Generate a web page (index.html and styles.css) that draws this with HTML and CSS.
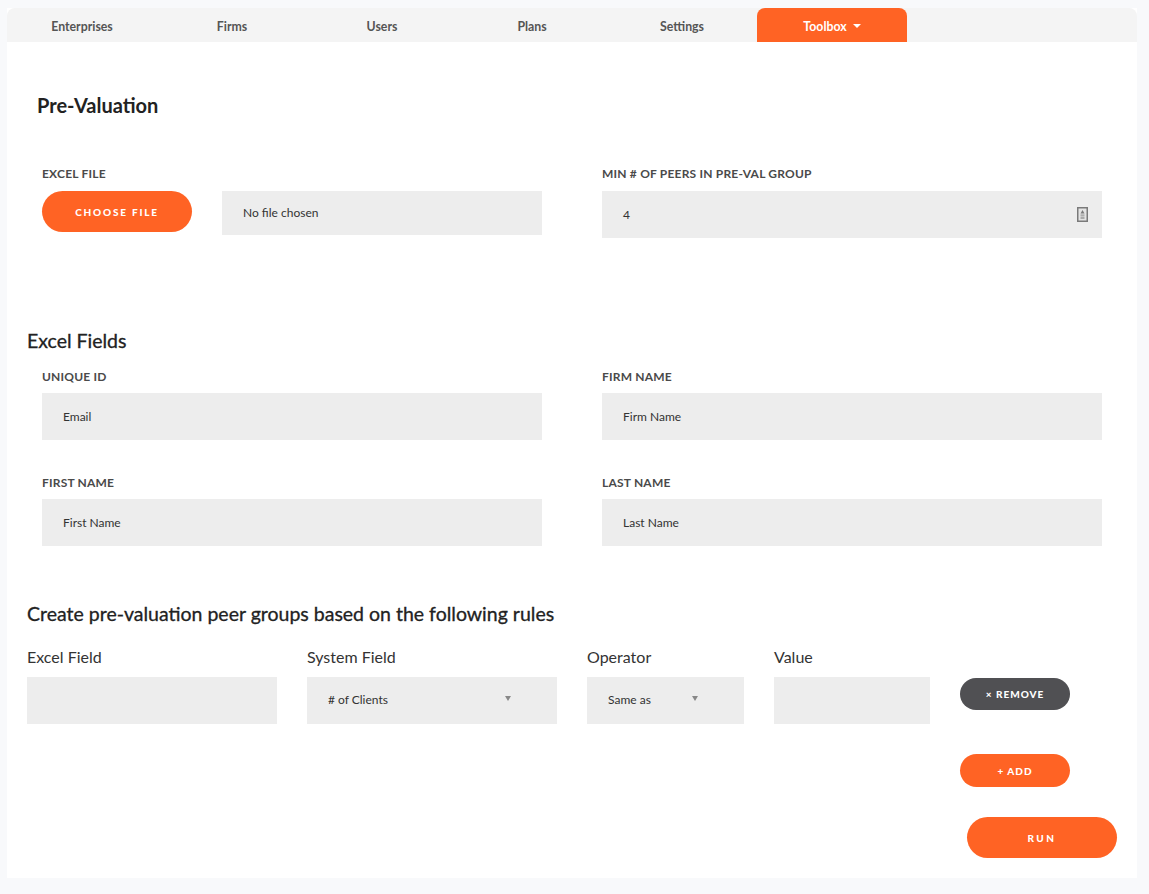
FILE: index.html
```html
<!DOCTYPE html>
<html lang="en">
<head>
<meta charset="utf-8">
<title>Pre-Valuation</title>
<link rel="stylesheet" href="styles.css">
</head>
<body>
<div class="card">
  <nav class="nav">
    <a class="tab">Enterprises</a>
    <a class="tab">Firms</a>
    <a class="tab">Users</a>
    <a class="tab">Plans</a>
    <a class="tab">Settings</a>
    <a class="tab active">Toolbox <span class="caret"></span></a>
  </nav>

  <section class="preval">
    <h1 class="title">Pre-Valuation</h1>
    <div class="grid top-grid">
      <div class="field">
        <label class="label">EXCEL FILE</label>
        <div class="file-row">
          <button class="btn btn-choose">CHOOSE FILE</button>
          <div class="file-box">No file chosen</div>
        </div>
      </div>
      <div class="field">
        <label class="label">MIN # OF PEERS IN PRE-VAL GROUP</label>
        <div class="input input-number">
          <span>4</span>
          <svg class="spin" width="11" height="15" viewBox="0 0 11 15">
            <rect x="0.75" y="0.75" width="9.5" height="13.5" fill="#e4e4e4" stroke="#7a7a7a" stroke-width="1.5"/>
            <path d="M5.5 3 L7.5 6.5 L3.5 6.5 Z" fill="#7a7a7a"/>
            <rect x="3.5" y="7.5" width="4" height="1.2" fill="#999"/>
            <rect x="3.5" y="9.5" width="4" height="2.5" fill="#aaa"/>
          </svg>
        </div>
      </div>
    </div>
  </section>

  <section class="excel-fields">
    <h2 class="subtitle">Excel Fields</h2>
    <div class="grid fields-grid">
      <div class="field">
        <label class="label">UNIQUE ID</label>
        <div class="input">Email</div>
      </div>
      <div class="field">
        <label class="label">FIRM NAME</label>
        <div class="input">Firm Name</div>
      </div>
      <div class="field">
        <label class="label">FIRST NAME</label>
        <div class="input">First Name</div>
      </div>
      <div class="field">
        <label class="label">LAST NAME</label>
        <div class="input">Last Name</div>
      </div>
    </div>
  </section>

  <section class="rules">
    <h2 class="subtitle">Create pre-valuation peer groups based on the following rules</h2>
    <div class="rule-row">
      <div class="col col-wide">
        <div class="col-label">Excel Field</div>
        <div class="input"></div>
      </div>
      <div class="col col-wide">
        <div class="col-label">System Field</div>
        <div class="input select"># of Clients<span class="arrow"></span></div>
      </div>
      <div class="col col-op">
        <div class="col-label">Operator</div>
        <div class="input select">Same as<span class="arrow"></span></div>
      </div>
      <div class="col col-val">
        <div class="col-label">Value</div>
        <div class="input"></div>
      </div>
      <div class="col col-btn">
        <button class="btn btn-remove">&#215; REMOVE</button>
      </div>
    </div>
    <div class="add-row">
      <button class="btn btn-add">+ ADD</button>
    </div>
    <div class="run-row">
      <button class="btn btn-run">RUN</button>
    </div>
  </section>
</div>
</body>
</html>
```

FILE: styles.css
```css
* { box-sizing: border-box; }

html, body {
  margin: 0;
  padding: 0;
  background: #f8f9fb;
  font-family: Lato, "Open Sans", sans-serif;
  color: #333;
}

body {
  padding: 8px 12px 16px 7px;
}

.card {
  width: 1130px;
  background: #fff;
  padding-bottom: 20px;
}

/* NAV */
.nav {
  display: flex;
  height: 34px;
  background: #f4f4f4;
  border-radius: 8px 8px 0 0;
}

.tab {
  width: 150px;
  display: flex;
  align-items: center;
  justify-content: center;
  padding-top: 2px;
  font-size: 12.3px;
  font-weight: 700;
  color: #555;
  text-decoration: none;
}

.tab.active {
  background: #ff6324;
  color: #fff;
  border-radius: 8px 8px 0 0;
}

.caret {
  display: inline-block;
  width: 0;
  height: 0;
  margin-left: 6px;
  border-left: 4px solid transparent;
  border-right: 4px solid transparent;
  border-top: 4px solid #fff;
}

/* PRE-VALUATION */
.preval {
  padding: 51px 0 0 30px;
}

.title {
  margin: 0;
  font-size: 20px;
  line-height: 24px;
  font-weight: 700;
  color: #222;
}

.grid {
  display: grid;
  grid-template-columns: 500px 500px;
  column-gap: 60px;
}

.top-grid {
  margin: 50px 0 0 5px;
}

.field {
  display: flex;
  flex-direction: column;
}

.label {
  font-size: 12px;
  line-height: 14px;
  font-weight: 700;
  letter-spacing: 0.2px;
  color: #4a4a4a;
  margin-bottom: 10px;
}

.file-row {
  display: flex;
  gap: 30px;
}

.btn {
  border: none;
  border-radius: 22px;
  font-family: Lato, sans-serif;
  font-weight: 900;
  color: #fff;
  cursor: pointer;
  padding: 0;
  letter-spacing: 1.8px;
}

.btn-choose {
  width: 150px;
  height: 41px;
  background: #ff6324;
  font-size: 10px;
}

.file-box {
  width: 320px;
  height: 44px;
  background: #ededed;
  padding-left: 21px;
  padding-bottom: 2px;
  display: flex;
  align-items: center;
  font-size: 12px;
  color: #333;
}

.input {
  height: 47px;
  background: #ededed;
  padding-left: 21px;
  display: flex;
  align-items: center;
  font-size: 12px;
  color: #333;
}

.input-number {
  justify-content: space-between;
  padding-right: 14px;
}

/* EXCEL FIELDS */
.excel-fields {
  padding: 91px 0 0 20px;
}

.subtitle {
  margin: 0;
  font-size: 19.5px;
  line-height: 24px;
  font-weight: 400;
  color: #222;
  -webkit-text-stroke: 0.3px #222;
}

.fields-grid {
  margin: 17px 0 0 15px;
  row-gap: 36px;
}

.fields-grid .label {
  margin-bottom: 9px;
}

/* RULES */
.rules {
  padding: 56px 0 0 20px;
}

.rule-row {
  display: flex;
  gap: 30px;
  margin-top: 21px;
}

.col {
  display: flex;
  flex-direction: column;
}

.col-label {
  font-size: 16px;
  line-height: 20px;
  color: #333;
  margin-bottom: 10px;
}

.col-wide { width: 250px; }
.col-op { width: 157px; }
.col-val { width: 156px; }
.col-btn {
  justify-content: flex-end;
  padding-bottom: 14px;
}

.select {
  position: relative;
  padding-bottom: 3px;
}

.arrow {
  position: absolute;
  right: 46px;
  top: 19px;
  width: 0;
  height: 0;
  border-left: 3px solid transparent;
  border-right: 3px solid transparent;
  border-top: 5px solid #888;
}

.btn-remove {
  width: 110px;
  height: 32px;
  background: #505053;
  font-size: 10px;
  letter-spacing: 1px;
  border-radius: 16px;
}

.add-row {
  display: flex;
  padding-left: 933px;
  margin-top: 30px;
}

.btn-add {
  width: 110px;
  height: 33px;
  background: #ff6324;
  font-size: 10px;
  letter-spacing: 1px;
  border-radius: 17px;
}

.run-row {
  display: flex;
  padding-left: 940px;
  margin-top: 30px;
}

.btn-run {
  width: 150px;
  height: 41px;
  background: #ff6324;
  font-size: 10px;
  letter-spacing: 2.5px;
  border-radius: 21px;
}
```
